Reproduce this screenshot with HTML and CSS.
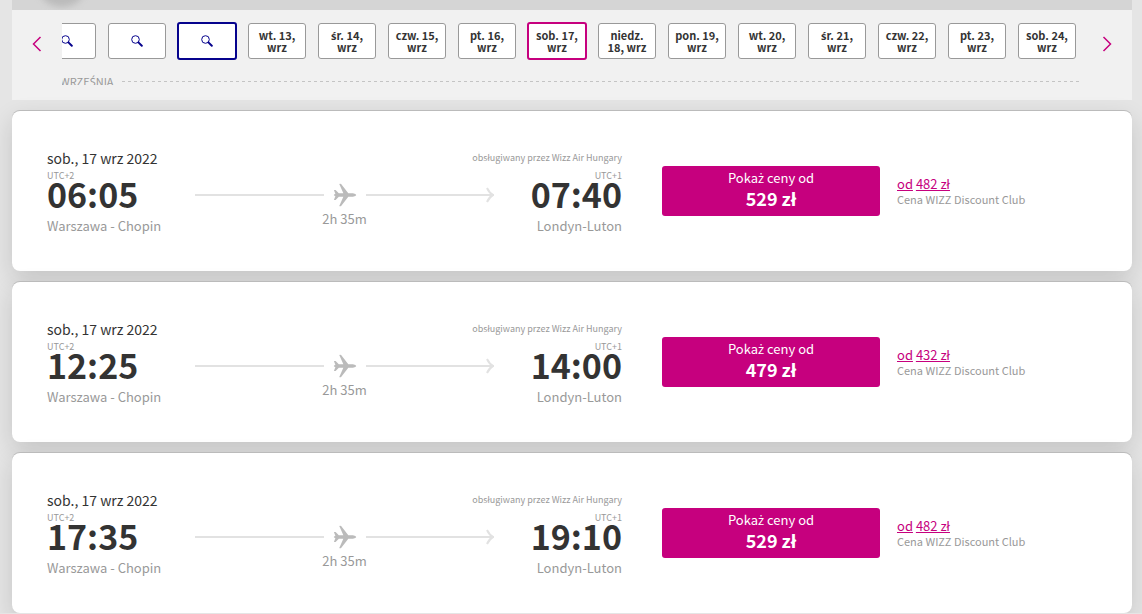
FILE: index.html
```
<!DOCTYPE html>
<html lang="pl">
<head>
<meta charset="UTF-8">
<meta name="viewport" content="width=device-width, initial-scale=1.0">
<title>Wybierz lot</title>
<link rel="stylesheet" href="styles.css">
</head>
<body>
<!-- shared icons -->
<svg class="sprite" aria-hidden="true">
  <symbol id="search" viewBox="0 0 12 12">
    <circle cx="4.5" cy="4.5" r="3.8" fill="none" stroke="currentColor" stroke-width="1"/>
    <path d="M7.4 7.4 L10.8 10.8" stroke="currentColor" stroke-width="2" stroke-linecap="round"/>
  </symbol>
  <symbol id="plane" viewBox="0 0 26 26">
    <path d="M1 7.6 H2.8 L6.3 11 Q8 11.3 11.2 11.2 L6.8 1.2 Q7.4 .4 8.8 1 L16.6 11 L21.6 11.1 Q25 11.6 25.2 13 Q25 14.4 21.6 14.9 L16.6 15 L8.8 25 Q7.4 25.6 6.8 24.8 L11.2 14.8 Q8 14.7 6.3 15 L2.8 18.4 H1 L2.6 14.2 L1 13.6 V12.4 L2.6 11.8 Z" fill="currentColor"/>
  </symbol>
  <symbol id="tip" viewBox="0 0 8 16">
    <path d="M1 1 Q3.5 6.2 7 8 Q3.5 9.8 1 15" fill="none" stroke="currentColor" stroke-width="2"/>
  </symbol>
</svg>

<div class="top-bar"><span class="top-shade"></span></div>

<nav class="date-strip" aria-label="Data wylotu">
  <button class="arrow" aria-label="Wcześniejsze daty">
    <svg width="10" height="16" viewBox="0 0 10 16"><path d="M8.5 1 L1.5 8 L8.5 15" fill="none" stroke="currentColor" stroke-width="1.5"/></svg>
  </button>
  <div class="date-window">
    <div class="dates">
      <button class="date search" aria-label="Szukaj"><svg width="12" height="12"><use href="#search"/></svg></button>
      <button class="date search" aria-label="Szukaj"><svg width="12" height="12"><use href="#search"/></svg></button>
      <button class="date search focused" aria-label="Szukaj"><svg width="12" height="12"><use href="#search"/></svg></button>
      <button class="date">wt. 13, wrz</button>
      <button class="date"><span class="accent">ś</span>r. 14, wrz</button>
      <button class="date">czw. 15, wrz</button>
      <button class="date">pt. 16, wrz</button>
      <button class="date selected">sob. 17, wrz</button>
      <button class="date">niedz. 18, wrz</button>
      <button class="date">pon. 19, wrz</button>
      <button class="date">wt. 20, wrz</button>
      <button class="date"><span class="accent">ś</span>r. 21, wrz</button>
      <button class="date">czw. 22, wrz</button>
      <button class="date">pt. 23, wrz</button>
      <button class="date">sob. 24, wrz</button>
    </div>
    <div class="month"><span>WRZE<span class="accent">Ś</span>NIA</span></div>
  </div>
  <button class="arrow" aria-label="Późniejsze daty">
    <svg width="10" height="16" viewBox="0 0 10 16"><path d="M1.5 1 L8.5 8 L1.5 15" fill="none" stroke="currentColor" stroke-width="1.5"/></svg>
  </button>
</nav>

<main class="flights">
  <article class="flight">
    <div class="route">
      <div class="route-head">
        <span class="day">sob., 17 wrz 2022</span>
        <span class="operator">obsługiwany przez Wizz Air Hungary</span>
      </div>
      <div class="stop">
        <div class="utc">UTC+2</div>
        <div class="time">06:05</div>
        <div class="place">Warszawa - Chopin</div>
      </div>
      <div class="path">
        <div class="line"><svg class="plane" width="26" height="24"><use href="#plane"/></svg><svg class="tip" width="8" height="16"><use href="#tip"/></svg></div>
        <div class="duration">2h 35m</div>
      </div>
      <div class="stop arrival">
        <div class="utc">UTC+1</div>
        <div class="time">07:40</div>
        <div class="place">Londyn-Luton</div>
      </div>
    </div>
    <button class="price">Poka<span class="accent">ż</span> ceny od <strong>529 zł</strong></button>
    <div class="club">
      <a href="#">od</a> <a href="#">482 zł</a>
      <p>Cena WIZZ Discount Club</p>
    </div>
  </article>

  <article class="flight">
    <div class="route">
      <div class="route-head">
        <span class="day">sob., 17 wrz 2022</span>
        <span class="operator">obsługiwany przez Wizz Air Hungary</span>
      </div>
      <div class="stop">
        <div class="utc">UTC+2</div>
        <div class="time">12:25</div>
        <div class="place">Warszawa - Chopin</div>
      </div>
      <div class="path">
        <div class="line"><svg class="plane" width="26" height="24"><use href="#plane"/></svg><svg class="tip" width="8" height="16"><use href="#tip"/></svg></div>
        <div class="duration">2h 35m</div>
      </div>
      <div class="stop arrival">
        <div class="utc">UTC+1</div>
        <div class="time">14:00</div>
        <div class="place">Londyn-Luton</div>
      </div>
    </div>
    <button class="price">Poka<span class="accent">ż</span> ceny od <strong>479 zł</strong></button>
    <div class="club">
      <a href="#">od</a> <a href="#">432 zł</a>
      <p>Cena WIZZ Discount Club</p>
    </div>
  </article>

  <article class="flight">
    <div class="route">
      <div class="route-head">
        <span class="day">sob., 17 wrz 2022</span>
        <span class="operator">obsługiwany przez Wizz Air Hungary</span>
      </div>
      <div class="stop">
        <div class="utc">UTC+2</div>
        <div class="time">17:35</div>
        <div class="place">Warszawa - Chopin</div>
      </div>
      <div class="path">
        <div class="line"><svg class="plane" width="26" height="24"><use href="#plane"/></svg><svg class="tip" width="8" height="16"><use href="#tip"/></svg></div>
        <div class="duration">2h 35m</div>
      </div>
      <div class="stop arrival">
        <div class="utc">UTC+1</div>
        <div class="time">19:10</div>
        <div class="place">Londyn-Luton</div>
      </div>
    </div>
    <button class="price">Poka<span class="accent">ż</span> ceny od <strong>529 zł</strong></button>
    <div class="club">
      <a href="#">od</a> <a href="#">482 zł</a>
      <p>Cena WIZZ Discount Club</p>
    </div>
  </article>
</main>
</body>
</html>
```

FILE: styles.css
```
* {
  box-sizing: border-box;
}
body {
  margin: 0;
  padding: 0 10px 0 12px;
  background-color: #e5e5e5;
  color: #333;
  font-family: "Noto Sans CJK SC", "Noto Sans", sans-serif;
}
button {
  font-family: inherit;
  padding: 0;
  cursor: pointer;
}
.accent {
  font-family: "Noto Sans", sans-serif;
  line-height: 1px;
}
.sprite {
  display: none;
}
.top-bar {
  position: relative;
  height: 10px;
  overflow: hidden;
  background-color: #d5d5d5;
}
.top-shade {
  position: absolute;
  left: 24px;
  bottom: 3px;
  width: 52px;
  height: 52px;
  border-radius: 50%;
  background-color: #bbb;
  filter: blur(3px);
}

/* date picker */
.date-strip {
  display: flex;
  height: 90px;
  background-color: #f1f1f1;
}
.arrow {
  flex: none;
  width: 50px;
  height: 68px;
  border: none;
  background: none;
  color: #c6007e;
}
.arrow svg {
  display: block;
  margin: 0 auto;
}
.date-window {
  flex: 1;
  min-width: 0;
  height: 75px;
  padding-top: 12px;
  overflow: hidden;
}
.dates {
  display: flex;
  align-items: center;
  gap: 12px;
  height: 38px;
  margin-left: -24px;
}
.date {
  flex: none;
  width: 58px;
  height: 36px;
  padding: 0 4px;
  border: 1px solid #999;
  border-radius: 3px;
  background-color: white;
  color: #333;
  font-size: 11px;
  font-weight: bold;
  line-height: 12px;
}
.date svg {
  display: block;
  margin: 0 auto;
}
.search {
  color: #06038d;
}
.focused, .selected {
  width: 60px;
  height: 38px;
  margin: 0 -1px;
  border: 2px solid #06038d;
}
.selected {
  border-color: #c6007e;
}
.month {
  display: flex;
  align-items: center;
  gap: 8px;
  height: 20px;
  margin: 11px 0 0 -2px;
  color: #999;
  font-size: 11px;
  line-height: 20px;
}
.month::after {
  content: "";
  flex: 1;
  height: 1px;
  background: repeating-linear-gradient(90deg, #c4c4c4 0 3px, transparent 3px 6px);
}

/* flight list */
.flights {
  display: flex;
  flex-direction: column;
  gap: 11px;
  padding-top: 11px;
}
.flight {
  display: grid;
  grid-template-columns: minmax(0, 1fr) 218px 217px;
  align-items: center;
  height: 160px;
  padding: 0 35px;
  border-radius: 8px;
  background-color: white;
  box-shadow: 0 -1px 0 #bbb, 0 8px 24px rgba(0, 0, 0, 0.14);
}
.route {
  display: grid;
  grid-template-columns: 148px minmax(0, 1fr) 128px;
  margin-right: 40px;
}
.route-head {
  grid-column: 1 / 4;
  display: flex;
  justify-content: space-between;
  align-items: center;
  height: 20px;
}
.day {
  font-size: 14px;
  line-height: 20px;
}
.operator, .utc {
  color: #999;
  font-size: 9px;
  line-height: 12px;
}
.stop {
  padding-top: 2px;
}
.time {
  font-size: 34px;
  font-weight: bold;
  line-height: 24px;
}
.place, .duration {
  color: #999;
  font-size: 13px;
  line-height: 17px;
}
.place {
  margin-top: 11px;
}
.arrival {
  text-align: right;
}
.path {
  padding-top: 12px;
  text-align: center;
}
.line {
  display: flex;
  align-items: center;
  height: 30px;
  color: #e2e2e2;
}
.line::before, .line::after {
  content: "";
  flex: 1;
  height: 2px;
  background-color: currentColor;
}
.plane {
  margin: 0 8px;
  color: #bbb;
}
.tip {
  order: 2;
  margin-left: -8px;
}
.price {
  height: 50px;
  padding-bottom: 4px;
  border: none;
  border-radius: 3px;
  background-color: #c6007e;
  color: white;
  font-size: 13px;
  line-height: 18px;
}
.price strong {
  display: block;
  font-size: 18px;
  line-height: 22px;
}
.club {
  padding-left: 17px;
  font-size: 13px;
  line-height: 16px;
}
.club a {
  color: #c6007e;
}
.club p {
  margin: 0;
  color: #999;
  font-size: 11px;
  line-height: 14px;
}
```
